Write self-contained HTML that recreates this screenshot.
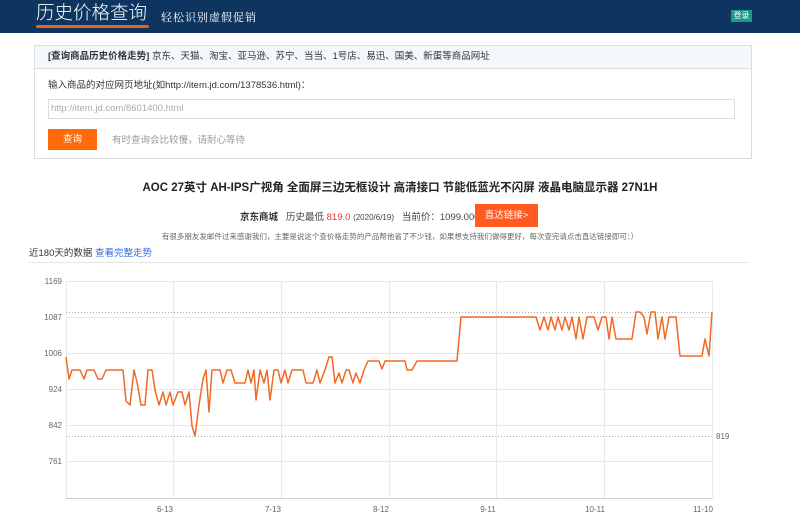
<!DOCTYPE html>
<html><head><meta charset="utf-8"><style>
*{margin:0;padding:0;box-sizing:border-box}
body{width:800px;height:527px;overflow:hidden;background:#fff;font-family:"Liberation Sans","Noto Sans CJK SC",sans-serif;color:#333;position:relative}
.hdr{position:absolute;left:0;top:0;width:800px;height:33px;background:#0d3560}
.logo{position:absolute;left:36px;top:2px;font-size:18.5px;line-height:22px;color:#fff;font-weight:300}
.logoline{position:absolute;left:36px;top:25px;width:113px;height:3px;background:#e8641e;border-radius:2px}
.slogan{position:absolute;left:161px;top:9px;font-size:11px;color:#fff;font-family:"Noto Serif CJK SC",serif;letter-spacing:1px}
.login{position:absolute;left:731px;top:10px;width:21px;height:12px;background:#179b8b;color:#fff;font-size:8px;line-height:12px;text-align:center}
.box{position:absolute;left:34px;top:45px;width:718px;height:114px;border:1px solid #ddd}
.boxh{height:23px;background:#f5f8fb;border-bottom:1px solid #ddd;font-size:9.5px;line-height:22px;padding-left:13px;color:#333}
.boxh b{color:#333}
.lbl{position:absolute;left:13px;top:31px;font-size:9.5px;color:#333}
.inp{position:absolute;left:13px;top:53px;width:687px;height:20px;border:1px solid #ddd;font-size:9.5px;color:#aaa;line-height:18px;padding-left:2px}
.btn{position:absolute;left:13px;top:83px;width:49px;height:21px;background:#ff6a0a;color:#fff;font-size:9.5px;text-align:center;line-height:21px}
.tip{position:absolute;left:77px;top:86px;font-size:9.5px;color:#999}
.title{position:absolute;left:0;width:800px;top:179px;text-align:center;font-size:11.5px;font-weight:bold;color:#222}
.info{position:absolute;top:209px;font-size:9.5px;color:#444}
.go{position:absolute;left:475px;top:204px;width:63px;height:23px;background:#ff5a1f;color:#fff;font-size:9.5px;text-align:center;line-height:23px}
.note{position:absolute;left:0;width:800px;top:231px;text-align:center;font-size:7.5px;color:#666}
.near{position:absolute;left:29px;top:245px;font-size:9.5px;color:#333}
.near span{color:#3366dd}
.sep{position:absolute;left:29px;top:262px;width:720px;height:1px;background:#e5e5e5}
</style></head><body>
<div class="hdr"><div class="logo">历史价格查询</div><div class="logoline"></div><div class="slogan">轻松识别虚假促销</div><div class="login">登录</div></div>
<div class="box"><div class="boxh"><b>[查询商品历史价格走势]</b> 京东、天猫、淘宝、亚马逊、苏宁、当当、1号店、易迅、国美、新蛋等商品网址</div>
<div class="lbl">输入商品的对应网页地址(如http://item.jd.com/1378536.html)：</div>
<div class="inp">http://item.jd.com/8601400.html</div>
<div class="btn">查询</div><div class="tip">有时查询会比较慢，请耐心等待</div></div>
<div class="title">AOC 27英寸 AH-IPS广视角 全面屏三边无框设计 高清接口 节能低蓝光不闪屏 液晶电脑显示器 27N1H</div>
<div class="info" style="left:240px;font-weight:bold;color:#333">京东商城</div>
<div class="info" style="left:286px">历史最低 <span style="color:#e33">819.0</span> <span style="font-size:8px">(2020/6/19)</span>&nbsp;&nbsp;&nbsp;当前价：1099.0000</div>
<div class="go">直达链接&gt;</div>
<div class="note">有很多朋友发邮件过来感谢我们，主要是说这个查价格走势的产品帮他省了不少钱，如果想支持我们做得更好，每次查完请点击直达链接即可：）</div>
<div class="near">近180天的数据 <span>查看完整走势</span></div>
<div class="sep"></div>
<svg style="position:absolute;left:0;top:0" width="800" height="527">
<g stroke="#e8e8e8" stroke-width="1">
<line x1="66" y1="281.5" x2="712" y2="281.5"/><line x1="66" y1="317.5" x2="712" y2="317.5"/><line x1="66" y1="353.5" x2="712" y2="353.5"/><line x1="66" y1="389.5" x2="712" y2="389.5"/><line x1="66" y1="425.5" x2="712" y2="425.5"/><line x1="66" y1="461.5" x2="712" y2="461.5"/>
<line x1="173.5" y1="281" x2="173.5" y2="498"/><line x1="281.5" y1="281" x2="281.5" y2="498"/><line x1="389.5" y1="281" x2="389.5" y2="498"/><line x1="496.5" y1="281" x2="496.5" y2="498"/><line x1="604.5" y1="281" x2="604.5" y2="498"/><line x1="712.5" y1="281" x2="712.5" y2="498"/>
<line x1="66.5" y1="281" x2="66.5" y2="498"/>
</g>
<line x1="66" y1="498.5" x2="712" y2="498.5" stroke="#ccc"/>
<g stroke="#aaa" stroke-dasharray="1,2"><line x1="66" y1="312.5" x2="712" y2="312.5"/><line x1="66" y1="436.5" x2="712" y2="436.5"/></g>
<g font-size="8" fill="#666" font-family="Liberation Sans,sans-serif" text-anchor="end">
<text x="62" y="284">1169</text><text x="62" y="320">1087</text><text x="62" y="356">1006</text><text x="62" y="392">924</text><text x="62" y="428">842</text><text x="62" y="464">761</text>
</g>
<text x="716" y="439" font-size="8" fill="#666" font-family="Liberation Sans,sans-serif">819</text>
<g font-size="8" fill="#666" font-family="Liberation Sans,sans-serif" text-anchor="middle">
<text x="165" y="512">6-13</text><text x="273" y="512">7-13</text><text x="381" y="512">8-12</text><text x="488" y="512">9-11</text><text x="595" y="512">10-11</text><text x="703" y="512">11-10</text>
</g>
<polyline fill="none" stroke="#f06a25" stroke-width="1.5" stroke-linejoin="round" points="66,357 69,379 72,370 80,370 84,379 87,370 94,370 98,379 102,379 106,370 123,370 126,401 130,405 134,370 137,382 141,405 145,405 148,370 152,370 155,390 159,405 163,392 166,405 170,392 173,405 178,392 182,392 185,405 189,392 192,426 195,436 199,405 203,379 206,370 209,412 212,370 220,370 223,383 227,370 231,370 235,383 245,383 248,370 251,383 254,370 256,400 260,370 264,383 267,370 270,400 274,370 278,370 281,383 285,370 288,383 292,370 303,370 306,383 313,383 317,370 320,383 325,370 329,357 332,357 335,383 339,373 342,383 346,370 349,370 353,383 356,373 360,383 364,370 368,361 379,361 382,369 385,361 405,361 407,370 412,370 417,361 457,361 461,317 536,317 540,330 544,317 548,330 551,317 555,330 558,317 562,330 565,317 569,330 572,317 576,339 579,317 583,339 587,317 594,317 598,330 602,317 606,317 609,339 612,317 616,339 632,339 636,312 640,312 644,317 647,334 651,312 655,312 658,339 662,317 665,339 669,317 676,317 680,356 702,356 705,339 709,356 712,312"/>
</svg>
</body></html>
